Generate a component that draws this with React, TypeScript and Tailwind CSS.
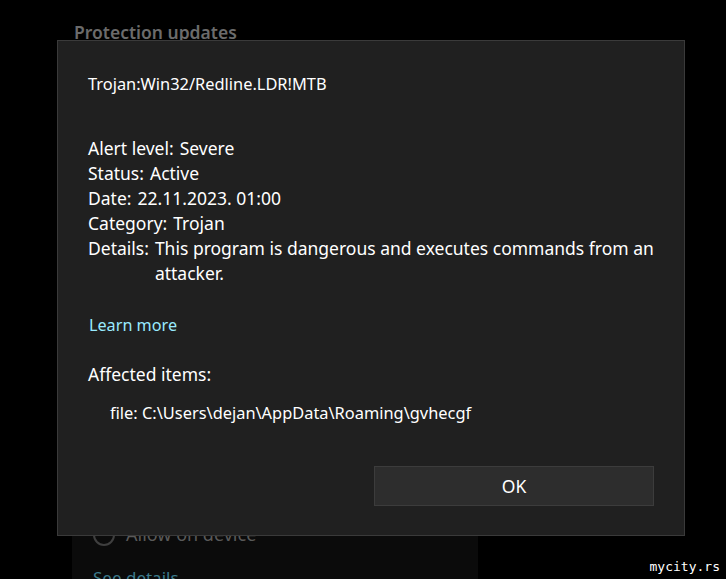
import React from "react";

const font = { fontFamily: '"Noto Sans", "Open Sans", sans-serif' };

export default function App() {
  return (
    <div className="relative w-[726px] h-[579px] overflow-hidden bg-black text-white" style={font}>
      <Background />
      <ThreatDialog />
      <div className="absolute right-[6px] bottom-[6px] text-[13px] leading-none text-white font-['DejaVu_Sans_Mono',monospace]">
        mycity.rs
      </div>
    </div>
  );
}

/* =====================
  BACKGROUND PAGE
===================== */
const Background = () => {
  return (
    <div className="flex flex-col pt-[19px]">
      <h2 className="pl-[74px] text-[17.5px] leading-[26px] font-semibold text-[#6b6b6b]">
        Protection updates
      </h2>
      <div className="ml-[72px] mt-[420px] w-[406px] h-[200px] bg-[#0b0b0b] pl-[21px] pt-[56px]">
        <div className="flex items-center gap-[11px]">
          <div className="w-[22px] h-[22px] rounded-full border-2 border-[#3f3f3f]" />
          <span className="text-[18px] text-[#5a5a5a]">Allow on device</span>
        </div>
        <div className="mt-[17px] text-[17px] text-[#3d7b8d]">See details</div>
      </div>
    </div>
  );
};

/* =====================
  DIALOG
===================== */
const Row = ({ label, value }: { label: string; value: string }) => (
  <div className="flex gap-[6px]">
    <span className="shrink-0">{label}</span>
    <span>{value}</span>
  </div>
);

const ThreatDialog = () => {
  return (
    <div className="absolute left-[57px] top-[40px] w-[628px] bg-[#202020] border border-[#3a3a3a] pl-[30px] pr-[30px] pt-[31px] pb-[29px]">
      <div className="text-[16.4px] leading-[24px]">Trojan:Win32/Redline.LDR!MTB</div>

      <div className="mt-[40px] text-[17.5px] leading-[25px]">
        <Row label="Alert level:" value="Severe" />
        <Row label="Status:" value="Active" />
        <Row label="Date:" value="22.11.2023. 01:00" />
        <Row label="Category:" value="Trojan" />
        <Row label="Details:" value="This program is dangerous and executes commands from an attacker." />
      </div>

      <div className="mt-[27px] pl-[1px] text-[16.2px] leading-[25px] text-[#99ebff]">Learn more</div>

      <div className="mt-[24px] text-[17.5px] leading-[25px]">Affected items:</div>
      <div className="mt-[13px] pl-[22px] text-[16.4px] leading-[25px]">
        file: C:\Users\dejan\AppData\Roaming\gvhecgf
      </div>

      <div className="mt-[41px] flex justify-end">
        <button className="w-[280px] h-[40px] bg-[#2d2d2d] border border-[#3c3c3c] text-[17.5px] text-white">
          OK
        </button>
      </div>
    </div>
  );
};
